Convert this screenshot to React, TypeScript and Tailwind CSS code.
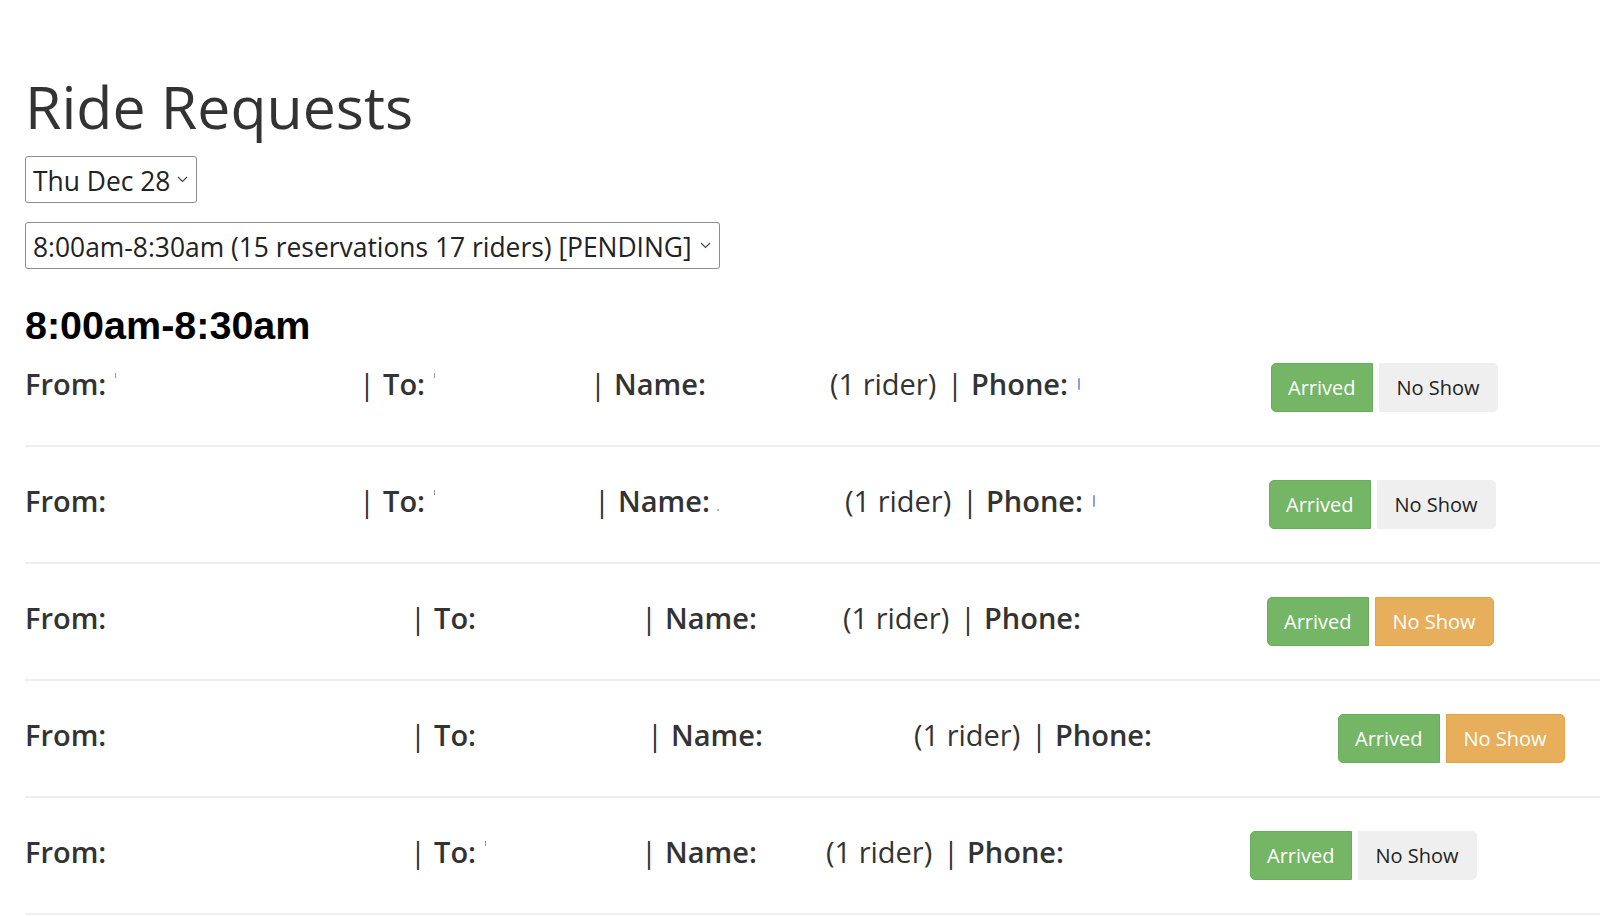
import React from "react";

type Row = {
  s1: string;
  s2: string;
  s3: string;
  s5: string;
  warn: boolean;
  first: boolean;
  blue: boolean;
  mFrom: boolean;
  mTo: boolean;
  mName: boolean;
};

const rows: Row[] = [
  { s1: "w-[334px]", s2: "w-[231px]", s3: "w-[240px]", s5: "w-[324px]", warn: false, first: true, blue: true, mFrom: true, mTo: true, mName: false },
  { s1: "w-[334px]", s2: "w-[235px]", s3: "w-[251px]", s5: "w-[307px]", warn: false, first: false, blue: true, mFrom: false, mTo: true, mName: true },
  { s1: "w-[385px]", s2: "w-[231px]", s3: "w-[202px]", s5: "w-[307px]", warn: true, first: false, blue: false, mFrom: false, mTo: false, mName: false },
  { s1: "w-[385px]", s2: "w-[237px]", s3: "w-[267px]", s5: "w-[307px]", warn: true, first: false, blue: false, mFrom: false, mTo: false, mName: false },
  { s1: "w-[385px]", s2: "w-[231px]", s3: "w-[185px]", s5: "w-[307px]", warn: false, first: false, blue: false, mFrom: false, mTo: true, mName: false },
];

function Chevron() {
  return (
    <svg width="11" height="7" viewBox="0 0 11 7" className="shrink-0">
      <polyline points="1,1 5.5,5.5 10,1" fill="none" stroke="#444" strokeWidth="1.1" />
    </svg>
  );
}

function Pipe() {
  return <span className="inline-block w-[16px] shrink-0 text-center font-normal">|</span>;
}

function Tick() {
  return <span className="relative -top-[9px] ml-[9px] inline-block h-[5px] w-[1px] bg-[#9a9a9a]" />;
}

function Dot() {
  return <span className="relative top-[9px] ml-[7px] inline-block h-[2px] w-[2px] bg-[#bbbbbb]" />;
}

export default function App() {
  return (
    <div className="min-h-screen bg-white font-['Open_Sans',sans-serif] text-[#333333]">
      <div className="pl-[25px] pt-[74px]">
        <h1 className="text-[59px] leading-[64px] font-normal text-[#333333]">Ride Requests</h1>

        <div className="mt-[18px] flex h-[47px] w-[172px] items-center justify-between rounded-[3px] border border-[#8c8c8c] pl-[7px] pr-[8px] text-[26.4px] leading-none text-[#222222]">
          <span className="pt-[4px]">Thu Dec 28</span>
          <Chevron />
        </div>

        <div className="mt-[19px] flex h-[47px] w-[695px] items-center justify-between rounded-[3px] border border-[#8c8c8c] pl-[7px] pr-[8px] text-[26.4px] leading-none text-[#222222]">
          <span className="pt-[4px]">8:00am-8:30am (15 reservations 17 riders) [PENDING]</span>
          <Chevron />
        </div>

        <h3 className="mt-[35px] font-['Liberation_Sans',Arial,sans-serif] text-[39.5px] leading-[43px] font-bold text-black">
          8:00am-8:30am
        </h3>

        <div className="flex flex-col">
          {rows.map((r, i) => (
            <div key={i} className="border-b-2 border-[#eeeeee]">
              <div
                className={
                  r.first
                    ? "flex items-center pt-[16px] pb-[33px] text-[29px] leading-[40px]"
                    : "flex items-center py-[33px] text-[29px] leading-[40px]"
                }
              >
                <div className="flex shrink-0 items-center pb-[7px]">
                  <div className={`${r.s1} flex shrink-0 items-center`}>
                    <span className="font-semibold">From:</span>
                    {r.mFrom && <Tick />}
                  </div>
                  <div className={`${r.s2} flex shrink-0 items-center`}>
                    <Pipe />
                    <span className="ml-[8px] font-semibold">To:</span>
                    {r.mTo && <Tick />}
                  </div>
                  <div className={`${r.s3} flex shrink-0 items-center`}>
                    <Pipe />
                    <span className="ml-[8px] font-semibold">Name:</span>
                    {r.mName && <Dot />}
                  </div>
                  <div className="w-[117px] shrink-0 font-normal">(1 rider)</div>
                  <div className={`${r.s5} flex shrink-0 items-center`}>
                    <Pipe />
                    <span className="ml-[8px] font-semibold">Phone:</span>
                    {r.blue && <span className="ml-[10px] inline-block h-[12px] w-[2px] rounded-full bg-[#7fa6dd]" />}
                  </div>
                </div>
                <div className="flex shrink-0 items-center text-[20px] leading-none">
                  <button className="flex h-[49px] items-center rounded-l-[5px] border border-[#68ad5b] bg-[#74b566] px-[16px] text-white">
                    Arrived
                  </button>
                  <button
                    className={
                      r.warn
                        ? "ml-[6px] flex h-[49px] items-center rounded-r-[5px] border border-[#e4a445] bg-[#e7ae5c] px-[17px] text-white"
                        : "ml-[6px] flex h-[49px] items-center rounded-r-[5px] border border-[#efefef] bg-[#efefef] px-[17px] text-[#222222]"
                    }
                  >
                    No Show
                  </button>
                </div>
              </div>
            </div>
          ))}
        </div>
      </div>
    </div>
  );
}
